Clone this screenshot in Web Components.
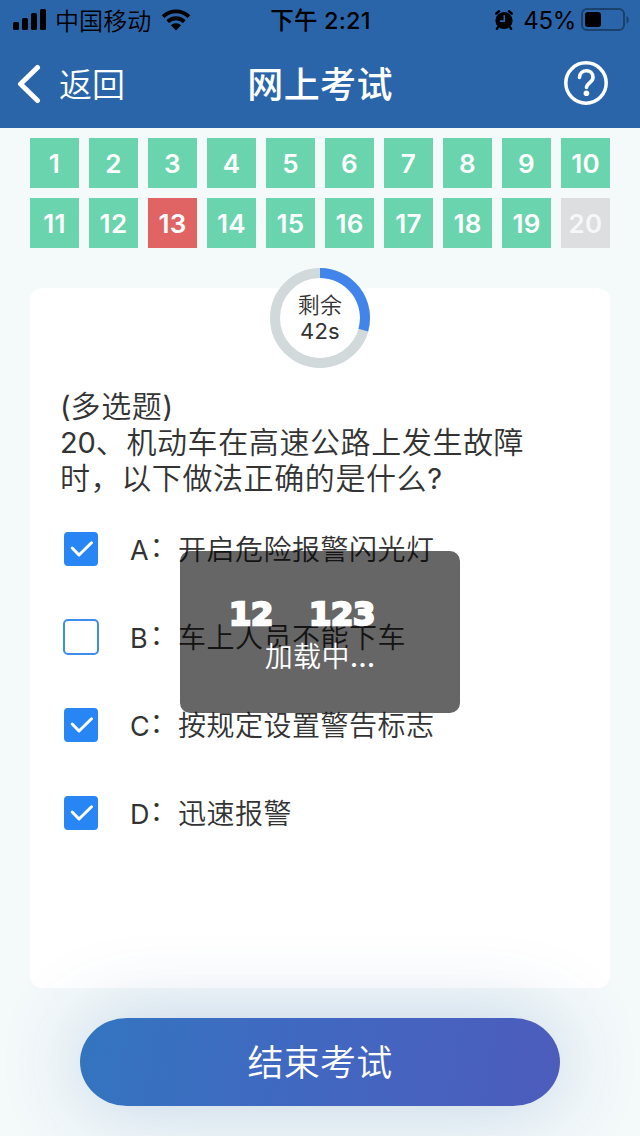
<!DOCTYPE html>
<html lang="zh-CN">
<head>
<meta charset="utf-8">
<title>网上考试</title>
<style>
html,body{margin:0;padding:0}
body{width:640px;height:1136px;overflow:hidden;background:#f4f9fa;color:#333;font-family:Inter,"Noto Sans CJK SC",sans-serif}
</style>
</head>
<body>
<exam-page></exam-page>
<script>
const define = (name, html, setup) => customElements.define(name, class extends HTMLElement {
  constructor() {
    super();
    const t = document.createElement('template');
    t.innerHTML = html;
    this.attachShadow({ mode: 'open' }).append(t.content.cloneNode(true));
  }
  connectedCallback() { if (setup) setup(this, this.shadowRoot); }
});

define('status-bar', `
<style>
:host{display:grid;grid-template-columns:1fr auto 1fr;align-items:center;height:40px;padding:0 11px 0 13px;color:#000;font-size:24px;line-height:42px;white-space:nowrap;box-sizing:border-box}
div{display:flex;align-items:center;height:40px}
svg{display:block;flex:none}
.carrier{margin-left:9px;letter-spacing:.1px;font-weight:350;transform:translateY(1.5px)}
.wifi{margin-left:10px}
.time{font-weight:500;font-size:23.5px;letter-spacing:.2px;transform:translate(-.5px,1px)}
.right{justify-content:flex-end}
.pct{margin:0 5px 0 10px;font-size:24px;letter-spacing:-.3px;transform:translateY(1px)}
</style>
<div><svg width="33" height="22" viewBox="0 0 33 22"><rect y="13" width="6" height="8" rx="1.5"/><rect x="9" y="9" width="6" height="12" rx="1.5"/><rect x="18" y="4" width="6" height="17" rx="1.5"/><rect x="27" y="0" width="6" height="21" rx="1.5"/></svg>
<span class="carrier">中国移动</span>
<svg class="wifi" width="30" height="22" viewBox="0 0 30 22"><path d="M15 21.500 9.900 16.300a7.200 7.200 0 0 1 10.200 0z"/><path d="M6.700 12.700a11.700 11.700 0 0 1 16.600 0M2 7.600a18.600 18.600 0 0 1 26 0" fill="none" stroke="#000" stroke-width="3.800"/></svg></div>
<div class="time">下午 2:21</div>
<div class="right"><svg width="18" height="20" viewBox="0 0 18 20"><circle cx="9" cy="10.500" r="8.600"/><path d="M1.300 3.500 4 1.300M16.700 3.500 14 1.300M3.500 16.500 1.900 18.700M14.500 16.500l1.600 2.200" stroke="#000" stroke-width="2.400" stroke-linecap="round"/><path d="M9.300 5.300v5.800H4.800" fill="none" stroke="#2b65a9" stroke-width="1.600"/></svg>
<span class="pct">45%</span>
<svg width="48" height="24" viewBox="0 0 48 24"><rect x="1" y="1" width="42" height="21" rx="5" fill="none" stroke="#1a406c" stroke-width="2"/><rect x="4" y="4" width="16" height="15" rx="3"/><path d="M45.500 8c3 1.200 3 6.300 0 7.500z" fill="#1a406c"/></svg></div>`);

define('nav-bar', `
<style>
:host{display:grid;grid-template-columns:1fr auto 1fr;align-items:center;height:88px;padding:0 32px 0 17px;color:#fff;line-height:88px;box-sizing:border-box;white-space:nowrap}
.back{display:flex;align-items:center;gap:18px;font-size:33px;font-weight:350}
.back span{transform:translateY(1px)}
h1{margin:0;font-size:36px;font-weight:500;letter-spacing:.4px}
.help{justify-self:end}
svg{display:block}
.title{transform:translate(7.600px,1px)}
</style>
<div class="back"><svg width="24" height="40" viewBox="0 0 24 40"><path d="M20.500 3.500 3.500 20 20.500 36.500" fill="none" stroke="#fff" stroke-width="5" stroke-linecap="round" stroke-linejoin="round"/></svg><span><slot name="back"></slot></span></div>
<h1 class="title"><slot></slot></h1>
<svg class="help" width="44" height="46" viewBox="0 0 44 46"><circle cx="22" cy="22" r="20.200" fill="none" stroke="#fff" stroke-width="3.500"/><path d="M15.500 16.500C16 7.500 29 7.500 29 16.500c0 5-6.500 5.500-6.500 10" fill="none" stroke="#fff" stroke-width="3.600" stroke-linecap="round"/><circle cx="22.400" cy="32.300" r="2.800" fill="#fff"/></svg>`);

define('number-cell', `
<style>
:host{display:block;height:50px;line-height:51px;text-align:center;background:#6ad4ae;color:#fff;font-size:26px;font-weight:600;letter-spacing:.3px}
:host([state=wrong]){background:#df6463}
:host([state=todo]){background:#dcdee0;color:#f6f7f8}
</style><slot></slot>`);

define('number-grid', `
<style>:host{display:grid;grid-template-columns:repeat(10,49px);gap:10px;padding:10px 30px 0}</style>`,
(el, root) => {
  for (let i = 1; i <= 20; i++) {
    const c = document.createElement('number-cell');
    c.textContent = i;
    if (i === 13) c.setAttribute('state', 'wrong');
    if (i === 20) c.setAttribute('state', 'todo');
    root.append(c);
  }
});

define('count-down', `
<style>
:host{display:grid;width:100px;height:100px;place-items:center;color:#333;text-align:center}
svg,.label{grid-area:1/1}
.label{font-size:22px;line-height:26px;letter-spacing:.2px}
.label span{display:block}
.name{font-weight:350}
</style>
<svg width="100" height="100" viewBox="0 0 100 100"><circle cx="50" cy="50" r="45" fill="#fff" stroke="#d1d9da" stroke-width="10"/><path d="M50 5A45 45 0 0 1 93.300 62.200" fill="none" stroke="#4185ea" stroke-width="10"/></svg>
<div class="label"><span class="name">剩余</span><span>42s</span></div>`);

define('answer-option', `
<style>
:host{display:flex;align-items:center;height:88px;font-size:28px;line-height:40px;letter-spacing:.5px;font-weight:350;white-space:nowrap}
svg{display:block;flex:none;margin-right:31px}
.key{font-weight:400;font-size:27px;width:19.500px;flex:none;transform:translateY(1.500px)}
.colon{transform:translateY(-2.500px)}
.text{transform:translateY(1px)}
:host(:not([checked])) .on,:host([checked]) .off{display:none}
</style>
<svg width="36" height="36" viewBox="0 0 36 36"><g class="on"><rect x="1" y="1" width="34" height="34" rx="4" fill="#2886f4"/><path d="M9.200 17 16 24 28.500 11.800" fill="none" stroke="#fff" stroke-width="3" stroke-linecap="round" stroke-linejoin="round"/></g><rect class="off" x="1" y="1" width="34" height="34" rx="4" fill="#fff" stroke="#3d8eea" stroke-width="2"/></svg><span class="key"><slot name="key"></slot></span><span class="colon">：</span><span class="text"><slot></slot></span>`);

define('question-card', `
<style>
:host{display:flex;flex-direction:column;width:580px;height:700px;margin:40px auto 0;border-radius:12px;background:#fff;box-sizing:border-box;padding:0 30px}
count-down{align-self:center;flex:none;margin-top:-20px}
.q{margin-top:20px;height:108px;flex:none;font-size:30px;letter-spacing:.6px;font-weight:350;white-space:nowrap}
.opts{margin-top:9px;margin-left:3px}
</style>
<count-down></count-down>
<div class="q"><slot name="question"></slot></div>
<div class="opts"><slot></slot></div>`);

define('submit-button', `
<style>
:host{display:block;margin:30px 80px 0}
button{display:block;width:480px;height:88px;border:0;padding:0;border-radius:47px/44px;background:linear-gradient(100deg,#3375bf,#4069c1 43%,#4d5cbc);box-shadow:0 0 80px rgba(43,101,169,.26);color:#fff;font:350 36px/90px Inter,"Noto Sans CJK SC",sans-serif;letter-spacing:.2px}
</style><button><slot></slot></button>`);

define('loading-toast', `
<style>
:host{position:absolute;left:180px;top:551px;width:280px;height:162px;border-radius:10px;background:rgba(0,0,0,.6);color:#fff;display:flex;flex-direction:column;align-items:center;box-sizing:border-box;padding-top:44px}
.brand{display:flex;gap:36px;height:38px;font:bold 32px/38px "DejaVu Sans",sans-serif;-webkit-text-stroke:2.400px #fff;letter-spacing:-.3px;margin-right:36px}
.msg{font-size:28px;line-height:40px;margin-top:4px;font-weight:350;letter-spacing:.3px}
</style>
<div class="brand"><span>12</span><span>123</span></div><div class="msg"><slot></slot></div>`);

define('exam-page', `
<style>
:host{display:block;position:relative;width:640px;height:1136px;overflow:hidden}
header{background:#2b65a9}
.line{display:block;height:36px;line-height:36px}
.n{font-weight:400;font-size:29px;letter-spacing:0;line-height:1}
.num{letter-spacing:-.1px}
</style>
<header><status-bar></status-bar><nav-bar><span slot="back">返回</span>网上考试</nav-bar></header>
<number-grid></number-grid>
<question-card>
<div slot="question"><span class="line"><span class="n">(</span>多选题<span class="n">)</span></span><span class="line"><span class="n num">20</span>、机动车在高速公路上发生故障</span><span class="line">时，以下做法正确的是什么<span class="n">?</span></span></div>
<answer-option checked><span slot="key">A</span>开启危险报警闪光灯</answer-option>
<answer-option><span slot="key">B</span>车上人员不能下车</answer-option>
<answer-option checked><span slot="key">C</span>按规定设置警告标志</answer-option>
<answer-option checked><span slot="key">D</span>迅速报警</answer-option>
</question-card>
<submit-button>结束考试</submit-button>
<loading-toast>加载中<span style="font-weight:450;letter-spacing:0">...</span></loading-toast>`);
</script>
</body>
</html>
